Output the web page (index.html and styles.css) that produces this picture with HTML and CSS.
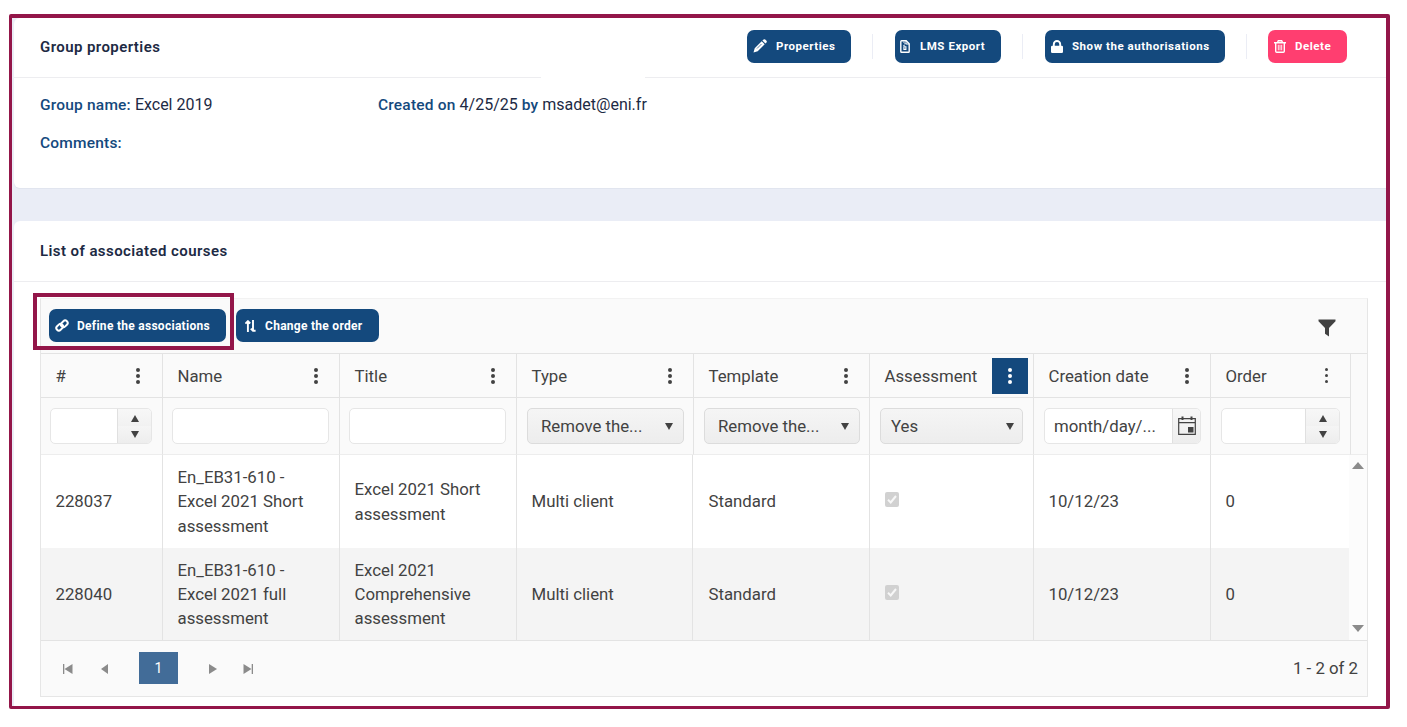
FILE: index.html
```
<!DOCTYPE html>
<html lang="en">
  <head>
    <meta charset="UTF-8" />
    <meta name="viewport" content="width=device-width, initial-scale=1.0" />
    <title>Group properties</title>
    <link rel="stylesheet" href="styles.css">
  </head>

  <body>
    <main class="frame">
      <section class="panel group">
        <header class="panel-header">
          <h2>Group properties</h2>
          <div class="actions">
            <button class="btn wide-text properties">
              <svg width="14" height="14" viewBox="0 0 14 14"><path d="M9.400 1.600 10.600.500q.8-.7 1.600 0l1.300 1.300q.7.8 0 1.600L12.400 4.600zM8.700 2.300l3 3L4.700 12.300.500 13.500l1.200-4.200z" fill="#fff"/><path d="M4 9.500l4.500-4.500" stroke="#14497d" stroke-width=".7"/></svg>
              <span>Properties</span>
            </button>
            <i class="sep"></i>
            <button class="btn wide-text export">
              <svg width="10" height="13" viewBox="0 0 10 13" fill="none" stroke="#fff" stroke-width="1.400"><path d="M.8 1.500q0-.8.8-.8h4.600L9.200 3.700v7.700q0 .8-.8.8H1.600q-.8 0-.8-.8z"/><path d="M6 .8V4h3M3.300 2.200h1.400M4.300 3.800h1.400M3.300 5.400h1.400" stroke-width="1"/><path d="M3.900 6.800h2v2.600h-2z" stroke-width="1.100"/></svg>
              <span>LMS Export</span>
            </button>
            <i class="sep"></i>
            <button class="btn wide-text show">
              <svg width="12" height="13" viewBox="0 0 12 13"><rect y="5.800" width="12" height="7.200" rx="1.200" fill="#fff"/><path d="M2.800 6.500V4.200a3.200 3.200 0 0 1 6.400 0v2.300" fill="none" stroke="#fff" stroke-width="1.900"/></svg>
              <span>Show the authorisations</span>
            </button>
            <i class="sep"></i>
            <button class="btn wide-text delete">
              <svg width="12" height="13" viewBox="0 0 12 13" fill="none" stroke="#fff" stroke-width="1.400"><path d="M0 2.700h12M3.500 2.500l.8-1.700h3.400l.8 1.700M1.700 3v8.300q0 1 1 1h6.600q1 0 1-1V3"/><path d="M4.300 4.800v5.500M6 4.800v5.500M7.700 4.800v5.500" stroke-width=".9"/></svg>
              <span>Delete</span>
            </button>
          </div>
        </header>
        <div class="details">
          <p class="group-name"><b>Group name:</b> Excel 2019</p>
          <p class="created"><b>Created on</b> 4/25/25 <b>by</b> msadet@eni.fr</p>
          <p class="comments"><b>Comments:</b></p>
        </div>
      </section>

      <section class="panel courses">
        <header class="panel-header">
          <h2>List of associated courses</h2>
        </header>

        <div class="grid">
          <div class="toolbar">
            <div class="highlighted">
              <button class="btn define">
                <svg width="14" height="13" viewBox="0 0 14 13" fill="none" stroke="#fff" stroke-width="2"><rect x="-3.700" y="-2.500" width="7.400" height="5" rx="2.500" transform="translate(4.700 8.200) rotate(-45)"/><rect x="-3.700" y="-2.500" width="7.400" height="5" rx="2.500" transform="translate(9.300 4.800) rotate(-45)"/></svg>
                <span>Define the associations</span>
              </button>
            </div>
            <button class="btn change">
              <svg width="11" height="12" viewBox="0 0 11 12" fill="none" stroke="#fff" stroke-width="1.900"><path d="M2.900 12V1.500M.4 3.700l2.500-2.500 2.300 2.300M8 0v10.800M5.800 8.600 8 10.800h2.600"/></svg>
              <span>Change the order</span>
            </button>
            <svg class="funnel" width="18" height="18" viewBox="0 0 18 18"><path d="M.5.500h17v1.700L11 9v8.500L7 14.800V9L.5 2.200z" fill="#424242"/></svg>
          </div>

          <table class="grid-head">
            <colgroup>
              <col class="w121"><col class="w177"><col class="w177"><col class="w177">
              <col class="w176"><col class="w164"><col class="w177"><col class="w140"><col class="w17">
            </colgroup>
            <tr class="titles">
              <th><div>#<span class="menu"><i></i><i></i><i></i></span></div></th>
              <th><div>Name<span class="menu"><i></i><i></i><i></i></span></div></th>
              <th><div>Title<span class="menu"><i></i><i></i><i></i></span></div></th>
              <th><div>Type<span class="menu"><i></i><i></i><i></i></span></div></th>
              <th><div>Template<span class="menu"><i></i><i></i><i></i></span></div></th>
              <th><div>Assessment<span class="menu active"><i></i><i></i><i></i></span></div></th>
              <th><div>Creation date<span class="menu"><i></i><i></i><i></i></span></div></th>
              <th><div>Order<span class="menu small"><i></i><i></i><i></i></span></div></th>
              <th class="scroll-head" rowspan="2"></th>
            </tr>
            <tr class="filters">
              <td><div class="field"><span class="spinner"><i class="up"></i><i class="down"></i></span></div></td>
              <td><div class="field"></div></td>
              <td><div class="field"></div></td>
              <td class="shifted"><div class="select">Remove the...<i class="down"></i></div></td>
              <td class="shifted"><div class="select">Remove the...<i class="down"></i></div></td>
              <td class="narrow"><div class="select yes">Yes<i class="down"></i></div></td>
              <td class="shifted">
                <div class="field date">month/day/...
                  <span class="calendar">
                    <svg width="18" height="19" viewBox="0 0 18 19"><path d="M.7 2.700h16.600v15.600H.7zM.7 6.700h16.600" fill="none" stroke="#424242" stroke-width="1.200"/><path d="M3.500.500h2v3.500h-2zM12.500.500h2v3.500h-2zM10 11h5.500v5.500H10z" fill="#424242"/></svg>
                  </span>
                </div>
              </td>
              <td class="narrow"><div class="field"><span class="spinner order"><i class="up"></i><i class="down"></i></span></div></td>
            </tr>
          </table>

          <div class="grid-content">
            <table class="grid-body">
              <colgroup>
                <col class="w121"><col class="w177"><col class="w177"><col class="w176">
                <col class="w177"><col class="w164"><col class="w177"><col class="w140">
              </colgroup>
              <tr class="first">
                <td>228037</td>
                <td>En_EB31-610 -<br>Excel 2021 Short<br>assessment</td>
                <td>Excel 2021 Short<br>assessment</td>
                <td>Multi client</td>
                <td class="template">Standard</td>
                <td><svg class="check" width="14" height="15" viewBox="0 0 14 15"><rect width="14" height="15" rx="2" fill="#d1d1d1"/><path d="M3 7.800l2.700 2.700L11 4" fill="none" stroke="#f7f7f7" stroke-width="2"/></svg></td>
                <td>10/12/23</td>
                <td>0</td>
              </tr>
              <tr class="alt">
                <td>228040</td>
                <td>En_EB31-610 -<br>Excel 2021 full<br>assessment</td>
                <td>Excel 2021<br>Comprehensive<br>assessment</td>
                <td>Multi client</td>
                <td class="template">Standard</td>
                <td><svg class="check" width="14" height="15" viewBox="0 0 14 15"><rect width="14" height="15" rx="2" fill="#d1d1d1"/><path d="M3 7.800l2.700 2.700L11 4" fill="none" stroke="#f7f7f7" stroke-width="2"/></svg></td>
                <td>10/12/23</td>
                <td>0</td>
              </tr>
            </table>
            <div class="scrollbar"><i class="up"></i><i class="down"></i></div>
          </div>

          <footer class="pager">
            <svg width="10" height="10" viewBox="0 0 10 10"><path d="M0 0h1.300v10H0zM9.500 0v10L1.500 5z" fill="#8b8b8b"/></svg>
            <svg width="7" height="10" viewBox="0 0 7 10"><path d="M7 0v10L0 5z" fill="#8b8b8b"/></svg>
            <span class="page">1</span>
            <svg width="8" height="10" viewBox="0 0 8 10"><path d="M0 0v10l8-5z" fill="#8b8b8b"/></svg>
            <svg width="10" height="10" viewBox="0 0 10 10"><path d="M8.700 0H10v10H8.700zM.5 0v10l8-5z" fill="#8b8b8b"/></svg>
            <span class="count">1 - 2 of 2</span>
          </footer>
        </div>
      </section>
    </main>
  </body>
</html>
```
FILE: styles.css
```
html,
body {
  margin: 0;
  padding: 0;
  background: #fff;
}

* {
  box-sizing: border-box;
}

body {
  font-family: Roboto, "Liberation Sans", sans-serif;
  font-size: 16.8px;
  color: #424242;
  overflow: hidden;
}

.frame {
  width: 1381px;
  height: 695px;
  margin: 14px 0 0 9px;
  padding-left: 2px;
  border: 4px solid #931649;
  border-left-width: 3px;
  border-bottom-width: 3px;
  border-radius: 2px;
  background: #eaedf6;
}

.panel {
  background: #fff;
}

.group {
  height: 170px;
  margin-bottom: 33px;
  border-radius: 6px 0 0 6px;
  box-shadow: 0 1px 0 #e1e5ef;
}

.courses {
  height: 485px;
  border-radius: 6px 0 0 0;
}

.panel-header {
  display: flex;
  align-items: center;
  height: 60px;
  padding: 0 39px 0 26px;
  border-bottom: 1px solid #ededf0;
}

/* the line is cut between the title and the actions */
.group .panel-header {
  border-bottom-color: transparent;
  background:
    linear-gradient(#ededf0, #ededf0) 0 100% / 527px 1px no-repeat border-box,
    linear-gradient(#ededf0, #ededf0) 100% 100% / 741px 1px no-repeat border-box;
}

.group h2 {
  padding-bottom: 2px;
}

.courses .panel-header {
  height: 61px;
}

h2 {
  margin: 0;
  font-size: 15px;
  font-weight: 600;
  letter-spacing: 0.42px;
  color: #1d2a44;
}

.actions {
  display: flex;
  align-items: center;
  margin: -2px 0 0 auto;
}

.sep {
  width: 1px;
  height: 25px;
  margin: 0 22px 0 21px;
  background: #ebedf5;
}

.sep:nth-last-of-type(1) {
  margin-right: 21px;
}

.btn {
  display: flex;
  align-items: center;
  height: 33px;
  padding: 0 0 0 6px;
  border: 0;
  border-radius: 7px;
  background: #14497d;
  color: #fff;
  font-family: Roboto, "Liberation Sans", sans-serif;
  font-size: 12px;
  font-weight: 700;
  letter-spacing: 0.28px;
  white-space: nowrap;
}

.btn svg {
  flex: none;
}

.wide-text {
  padding-bottom: 1px;
  font-size: 11.5px;
  letter-spacing: 0.54px;
}

.properties {
  width: 104px;
  gap: 9px;
}

.export {
  width: 106px;
  gap: 10px;
  padding-left: 5px;
}

.show {
  width: 180px;
  gap: 9px;
}

.delete {
  width: 79px;
  gap: 9px;
  background: #ff3e70;
}

.details {
  display: grid;
  grid-template-columns: 338px 1fr;
  row-gap: 14px;
  padding: 15px 26px;
  font-size: 16px;
  line-height: 24px;
  color: #1d2a44;
}

.details p {
  margin: 0;
}

.details b {
  font-weight: 500;
  font-size: 15.5px;
  letter-spacing: 0.2px;
  color: #14497d;
}

.grid {
  width: 1328px;
  height: 399px;
  margin: 16px 0 0 26px;
  border: 1px solid #e6e6e6;
  border-top-color: #f2f2f2;
  background: #fafafa;
}

.toolbar {
  display: flex;
  align-items: flex-start;
  height: 54px;
  padding-right: 31px;
}

.highlighted {
  width: 201px;
  height: 57px;
  margin: -6px 2px 0 -8px;
  padding: 12px 0 0 12px;
  border: 4px solid #931649;
}

.define {
  width: 177px;
  gap: 8px;
}

.change {
  width: 143px;
  margin-top: 10px;
  gap: 9px;
  padding-left: 9px;
}

.funnel {
  margin: 20px 0 0 auto;
}

table {
  table-layout: fixed;
  border-spacing: 0;
}

.grid-head {
  width: 1326px;
  border-top: 1px solid #e3e3e3;
}

.w17 { width: 17px; }
.w121 { width: 121px; }
.w140 { width: 140px; }
.w164 { width: 164px; }
.w176 { width: 176px; }
.w177 { width: 177px; }

th,
td {
  padding: 0;
  border-left: 1px solid #e3e3e3;
  font-weight: 400;
  text-align: left;
}

th:first-child,
td:first-child {
  border-left: 0;
}

.titles th {
  height: 44px;
  border-bottom: 1px solid #e3e3e3;
}

.titles .scroll-head {
  border-bottom-color: #ededed;
}

.titles div {
  display: flex;
  align-items: center;
  justify-content: space-between;
  padding: 0 5px 0 14.5px;
}

.menu {
  display: flex;
  flex-direction: column;
  align-items: center;
  justify-content: center;
  gap: 2px;
  width: 36px;
  height: 36px;
}

.menu i {
  width: 4px;
  height: 4px;
  border-radius: 50%;
  background: #424242;
}

.menu.small {
  gap: 3px;
  margin-right: 1px;
}

.menu.small i {
  width: 3px;
  height: 3px;
}

.menu.active {
  background: #14497d;
}

.menu.active i {
  background: #fff;
}

.titles th:first-child .menu {
  margin-right: 1px;
}

.filters td {
  height: 57px;
  padding: 0 10px 0 9px;
  border-bottom: 1px solid #ededed;
}

.filters .shifted {
  padding: 0 9px 0 10px;
}

.filters .narrow {
  padding: 0 10px;
}

.field,
.select {
  display: flex;
  align-items: center;
  height: 36px;
  border: 1px solid #e6e6e6;
  border-radius: 5px;
  background: #fff;
  overflow: hidden;
  white-space: nowrap;
}

.select {
  justify-content: space-between;
  padding: 0 10px 0 13px;
  border-color: #dcdcdc;
  background: linear-gradient(#f5f5f5, #ededed);
}

.yes {
  padding: 0 8px 0 10px;
}

.date {
  padding-left: 9px;
}

.up,
.down {
  border: 4.5px solid transparent;
  border-top: 0;
  border-bottom: 7px solid #424242;
}

.down {
  border-top: 7px solid #424242;
  border-bottom: 0;
}

.spinner {
  display: flex;
  flex-direction: column;
  align-items: center;
  justify-content: center;
  gap: 9px;
  width: 34px;
  height: 34px;
  margin-left: auto;
  border-left: 1px solid #e0e0e0;
  background: linear-gradient(#f7f7f7, #f1f1f1 50%, #f5f5f5 50%, #ededed);
}

.calendar {
  display: flex;
  align-items: center;
  justify-content: center;
  width: 28px;
  height: 34px;
  margin-left: auto;
  border-left: 1px solid #e0e0e0;
  background: linear-gradient(#f7f7f7, #ededed);
}

.calendar svg {
  margin-top: -2px;
}

.grid-content {
  display: flex;
  height: 185px;
  background: #fff;
}

.grid-body {
  width: 1309px;
  line-height: 24.3px;
}

.grid-body td {
  height: 92px;
  padding: 0 0 0 14.5px;
}

.grid-body .template {
  padding-left: 15.5px;
}

.grid-body .first td {
  height: 93px;
}

.alt {
  background: #f4f4f4;
}

.check {
  display: block;
  margin-top: -4px;
}

.scrollbar {
  display: flex;
  flex-direction: column;
  align-items: center;
  justify-content: space-between;
  width: 18px;
  margin-left: -1px;
  padding: 7px 0 8px;
  background: #fcfcfc;
}

.scrollbar .up {
  border-width: 0 6px 7px;
  border-bottom-color: #8b8b8b;
}

.scrollbar .down {
  border-width: 7px 6px 0;
  border-top-color: #8b8b8b;
}

.pager {
  display: flex;
  align-items: center;
  height: 56px;
  padding: 0 9px 0 22px;
  border-top: 1px solid #e3e3e3;
}

.pager svg:nth-of-type(2) {
  margin-left: 28px;
}

.page {
  width: 39px;
  height: 32px;
  margin: -1px 31px 0;
  background: #426c98;
  color: #fff;
  font-size: 14px;
  line-height: 32px;
  text-align: center;
}

.pager svg:nth-of-type(4) {
  margin-left: 26px;
}

.count {
  margin: -1px 0 0 auto;
}
```
